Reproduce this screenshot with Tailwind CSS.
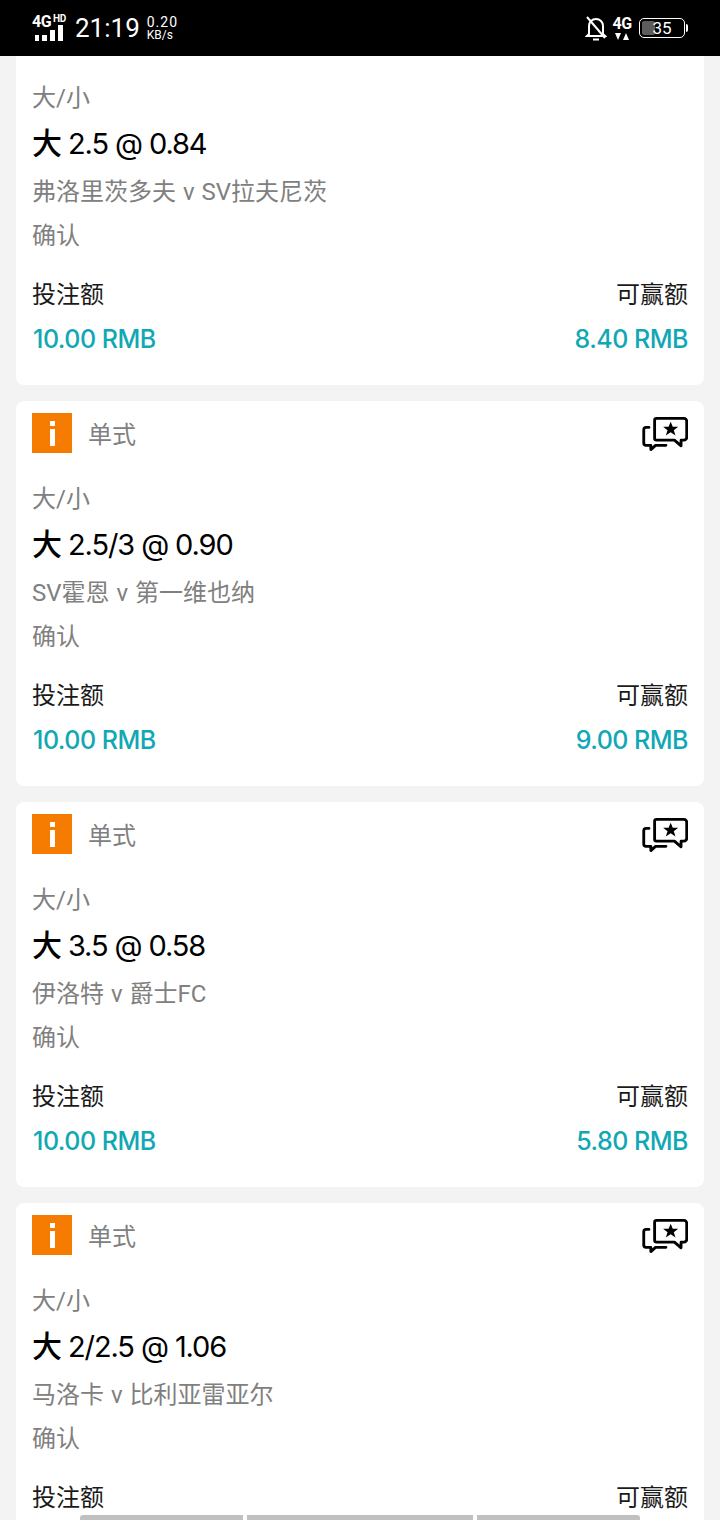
<!DOCTYPE html>
<html lang="zh">
<head>
    <meta charset="UTF-8">
    <title>投注记录</title>
    <script src="https://cdn.jsdelivr.net/npm/@tailwindcss/browser@4"></script>
</head>
<body class="bg-[#f3f3f3] font-['Roboto','Noto_Sans_CJK_SC',sans-serif]">
<div class="relative w-[720px] h-[1520px] overflow-hidden">

    <!-- status bar -->
    <div class="absolute top-0 left-0 right-0 h-[56px] bg-black text-white flex items-center justify-between pl-[32px] pr-[32px] z-10">
        <div class="flex items-center">
            <div class="w-[34px] h-[26px] flex flex-col relative">
                <div class="text-[16px] leading-[13px] font-bold tracking-[-0.5px]">4G</div>
                <div class="absolute left-[21px] top-[0px] text-[10px] leading-[8px] font-bold tracking-[-0.3px]">HD</div>
                <div class="absolute left-[3px] bottom-[0px] flex items-end gap-[3px]">
                    <span class="w-[4px] h-[6px] bg-white"></span>
                    <span class="w-[5px] h-[6px] bg-white"></span>
                    <span class="w-[5px] h-[11px] bg-white"></span>
                    <span class="w-[5px] h-[16px] bg-white"></span>
                </div>
            </div>
            <div class="text-[26px] leading-none ml-[9px]">21:19</div>
            <div class="ml-[7px] mt-[1px]">
                <div class="text-[14px] leading-[13px] tracking-[1px]">0.20</div>
                <div class="text-[12px] leading-[12px]">KB/s</div>
            </div>
        </div>
        <div class="flex items-center">
            <svg width="22" height="25" viewBox="0 0 22 25" fill="none" stroke="white" stroke-width="2">
                <path d="M4 18V10c0-4 3-7 7-7s7 3 7 7v8l2 2H2z"/>
                <path d="M8 23.500h6" stroke-width="2"/>
                <path d="M2 1l18 21"/>
            </svg>
            <div class="ml-[5px] w-[20px] flex flex-col items-center">
                <div class="text-[16px] leading-[14px] font-bold tracking-[-0.5px]">4G</div>
                <svg class="mt-[2px]" width="16" height="7" viewBox="0 0 16 7" fill="white"><path d="M1 0h6L4 7zM9 7h6L12 0z"/></svg>
            </div>
            <div class="ml-[7px] w-[46px] h-[20px] rounded-[5px] border border-white relative flex items-center justify-center overflow-hidden">
                <div class="absolute left-[2px] top-[2px] bottom-[2px] w-[13px] bg-[#5c5c5c] rounded-[2px]"></div>
                <span class="relative text-[17px] leading-none">35</span>
            </div>
            <div class="w-[2px] h-[8px] bg-white ml-[1px] rounded-r-[2px]"></div>
        </div>
    </div>

    <!-- bet list -->
    <div class="flex flex-col gap-[16px] px-[16px]">

        <!-- first card is scrolled under the status bar, its header is out of view -->
        <div class="bg-white rounded-[8px] h-[385px] px-[16px] pt-[82px]">
            <div class="text-[24px] leading-[32px] text-[#808080]">大/小</div>
            <div class="font-['Inter','Noto_Sans_CJK_SC',sans-serif] font-[420] text-[29px] leading-[40px] tracking-[-1.1px] text-black mt-[9px]"><span class="text-[30px] font-medium">大</span> 2.5 @ 0.84</div>
            <div class="text-[24px] leading-[32px] [word-spacing:1px] text-[#808080] mt-[12px]">弗洛里茨多夫 v SV拉夫尼茨</div>
            <div class="text-[24px] leading-[32px] text-[#808080] mt-[12px]">确认</div>
            <div class="flex justify-between text-[24px] leading-[32px] text-[#1a1a1a] mt-[27px]"><span>投注额</span><span>可赢额</span></div>
            <div class="font-['Inter',sans-serif] flex justify-between text-[25px] leading-[32px] font-medium tracking-[-0.5px] text-[#10a8b4] mt-[12px]"><span class="ml-[1px]">10.00 RMB</span><span>8.40 RMB</span></div>
        </div>

        <div class="bg-white rounded-[8px] h-[385px] px-[16px] pt-[12px]">
            <div class="flex items-center justify-between h-[40px]">
                <div class="flex items-center">
                    <div class="w-[40px] h-[40px] bg-[#f57c00] flex items-center justify-center">
                        <div class="flex flex-col items-center gap-[3px]"><span class="w-[5px] h-[5px] bg-white"></span><span class="w-[5px] h-[17px] bg-white"></span></div>
                    </div>
                    <span class="ml-[16px] mt-[3px] text-[24px] text-[#808080]">单式</span>
                </div>
                <svg class="mt-[2px]" width="46" height="34" viewBox="0 0 48 36" fill="none" stroke="black" stroke-width="3" stroke-linejoin="round" stroke-linecap="round">
                    <path d="M13 3.500a2 2 0 0 1 2-2h29a3 3 0 0 1 3 3v17a3 3 0 0 1-3 3h-3v6l-7-6H15a2 2 0 0 1-2-2z"/>
                    <path d="M7 11H4a2.500 2.500 0 0 0-2.500 2.500v14A2.500 2.500 0 0 0 4 30h5v4.500l5-4.500h11"/>
                    <path fill="black" stroke="none" d="M30 5l2.200 5.300h5.800l-4.700 3.600 1.800 5.800-5.100-3.500-5.100 3.500 1.800-5.800-4.700-3.600h5.800z"/>
                </svg>
            </div>
            <div class="text-[24px] leading-[32px] text-[#808080] mt-[30px]">大/小</div>
            <div class="font-['Inter','Noto_Sans_CJK_SC',sans-serif] font-[420] text-[29px] leading-[40px] tracking-[-1.1px] text-black mt-[9px]"><span class="text-[30px] font-medium">大</span> 2.5/3 @ 0.90</div>
            <div class="text-[24px] leading-[32px] [word-spacing:1px] text-[#808080] mt-[12px]">SV霍恩 v 第一维也纳</div>
            <div class="text-[24px] leading-[32px] text-[#808080] mt-[12px]">确认</div>
            <div class="flex justify-between text-[24px] leading-[32px] text-[#1a1a1a] mt-[27px]"><span>投注额</span><span>可赢额</span></div>
            <div class="font-['Inter',sans-serif] flex justify-between text-[25px] leading-[32px] font-medium tracking-[-0.5px] text-[#10a8b4] mt-[12px]"><span class="ml-[1px]">10.00 RMB</span><span>9.00 RMB</span></div>
        </div>

        <div class="bg-white rounded-[8px] h-[385px] px-[16px] pt-[12px]">
            <div class="flex items-center justify-between h-[40px]">
                <div class="flex items-center">
                    <div class="w-[40px] h-[40px] bg-[#f57c00] flex items-center justify-center">
                        <div class="flex flex-col items-center gap-[3px]"><span class="w-[5px] h-[5px] bg-white"></span><span class="w-[5px] h-[17px] bg-white"></span></div>
                    </div>
                    <span class="ml-[16px] mt-[3px] text-[24px] text-[#808080]">单式</span>
                </div>
                <svg class="mt-[2px]" width="46" height="34" viewBox="0 0 48 36" fill="none" stroke="black" stroke-width="3" stroke-linejoin="round" stroke-linecap="round">
                    <path d="M13 3.500a2 2 0 0 1 2-2h29a3 3 0 0 1 3 3v17a3 3 0 0 1-3 3h-3v6l-7-6H15a2 2 0 0 1-2-2z"/>
                    <path d="M7 11H4a2.500 2.500 0 0 0-2.500 2.500v14A2.500 2.500 0 0 0 4 30h5v4.500l5-4.500h11"/>
                    <path fill="black" stroke="none" d="M30 5l2.200 5.300h5.800l-4.700 3.600 1.800 5.800-5.100-3.500-5.100 3.500 1.800-5.800-4.700-3.600h5.800z"/>
                </svg>
            </div>
            <div class="text-[24px] leading-[32px] text-[#808080] mt-[30px]">大/小</div>
            <div class="font-['Inter','Noto_Sans_CJK_SC',sans-serif] font-[420] text-[29px] leading-[40px] tracking-[-1.1px] text-black mt-[9px]"><span class="text-[30px] font-medium">大</span> 3.5 @ 0.58</div>
            <div class="text-[24px] leading-[32px] [word-spacing:1px] text-[#808080] mt-[12px]">伊洛特 v 爵士FC</div>
            <div class="text-[24px] leading-[32px] text-[#808080] mt-[12px]">确认</div>
            <div class="flex justify-between text-[24px] leading-[32px] text-[#1a1a1a] mt-[27px]"><span>投注额</span><span>可赢额</span></div>
            <div class="font-['Inter',sans-serif] flex justify-between text-[25px] leading-[32px] font-medium tracking-[-0.5px] text-[#10a8b4] mt-[12px]"><span class="ml-[1px]">10.00 RMB</span><span>5.80 RMB</span></div>
        </div>

        <div class="bg-white rounded-[8px] h-[385px] px-[16px] pt-[12px]">
            <div class="flex items-center justify-between h-[40px]">
                <div class="flex items-center">
                    <div class="w-[40px] h-[40px] bg-[#f57c00] flex items-center justify-center">
                        <div class="flex flex-col items-center gap-[3px]"><span class="w-[5px] h-[5px] bg-white"></span><span class="w-[5px] h-[17px] bg-white"></span></div>
                    </div>
                    <span class="ml-[16px] mt-[3px] text-[24px] text-[#808080]">单式</span>
                </div>
                <svg class="mt-[2px]" width="46" height="34" viewBox="0 0 48 36" fill="none" stroke="black" stroke-width="3" stroke-linejoin="round" stroke-linecap="round">
                    <path d="M13 3.500a2 2 0 0 1 2-2h29a3 3 0 0 1 3 3v17a3 3 0 0 1-3 3h-3v6l-7-6H15a2 2 0 0 1-2-2z"/>
                    <path d="M7 11H4a2.500 2.500 0 0 0-2.500 2.500v14A2.500 2.500 0 0 0 4 30h5v4.500l5-4.500h11"/>
                    <path fill="black" stroke="none" d="M30 5l2.200 5.300h5.800l-4.700 3.600 1.800 5.800-5.100-3.500-5.100 3.500 1.800-5.800-4.700-3.600h5.800z"/>
                </svg>
            </div>
            <div class="text-[24px] leading-[32px] text-[#808080] mt-[30px]">大/小</div>
            <div class="font-['Inter','Noto_Sans_CJK_SC',sans-serif] font-[420] text-[29px] leading-[40px] tracking-[-1.1px] text-black mt-[9px]"><span class="text-[30px] font-medium">大</span> 2/2.5 @ 1.06</div>
            <div class="text-[24px] leading-[32px] [word-spacing:1px] text-[#808080] mt-[12px]">马洛卡 v 比利亚雷亚尔</div>
            <div class="text-[24px] leading-[32px] text-[#808080] mt-[12px]">确认</div>
            <div class="flex justify-between text-[24px] leading-[32px] text-[#1a1a1a] mt-[27px]"><span>投注额</span><span>可赢额</span></div>
        </div>
    </div>

    <!-- bottom tab strip, mostly cut off by the screen edge -->
    <div class="absolute bottom-0 left-[80px] w-[560px] h-[5px] flex gap-[4px]">
        <div class="w-[163px] bg-[#c0c0c0] rounded-tl-[3px]"></div>
        <div class="w-[226px] bg-[#c0c0c0]"></div>
        <div class="w-[163px] bg-[#c0c0c0] rounded-tr-[3px]"></div>
    </div>
</div>
</body>
</html>
